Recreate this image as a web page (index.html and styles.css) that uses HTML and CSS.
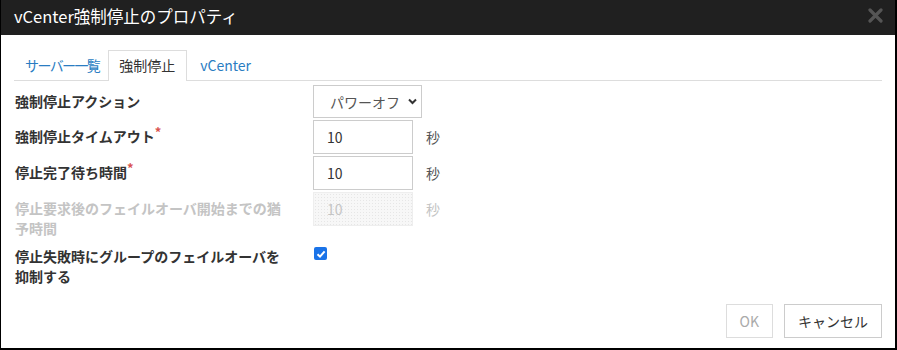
FILE: index.html
```html
<!DOCTYPE html>
<html lang="ja">
<head>
<meta charset="utf-8">
<link rel="stylesheet" href="styles.css">
</head>
<body>
<div class="dialog">
  <div class="header">
    <span class="title">vCenter強制停止のプロパティ</span>
    <svg class="close" width="15" height="15" viewBox="0 0 15 15"><path d="M2 2 L13 13 M13 2 L2 13" stroke="#555" stroke-width="3.2" stroke-linecap="round"/></svg>
  </div>
  <div class="body">
    <div class="tabs">
      <span class="tab narrow">サーバー一覧</span>
      <span class="tab active">強制停止</span>
      <span class="tab">vCenter</span>
    </div>
    <div class="form">
      <div class="row">
        <div class="label">強制停止アクション</div>
        <div class="ctrl"><div class="select">パワーオフ<svg class="caret" width="9" height="7" viewBox="0 0 9 7"><path d="M1 1.5 L4.5 5 L8 1.5" fill="none" stroke="#333" stroke-width="2"/></svg></div></div>
      </div>
      <div class="row">
        <div class="label">強制停止タイムアウト<span class="req">*</span></div>
        <div class="ctrl"><div class="input">10</div><span class="unit">秒</span></div>
      </div>
      <div class="row">
        <div class="label">停止完了待ち時間<span class="req">*</span></div>
        <div class="ctrl"><div class="input">10</div><span class="unit">秒</span></div>
      </div>
      <div class="row disabled">
        <div class="label">停止要求後のフェイルオーバ開始までの猶予時間</div>
        <div class="ctrl"><div class="input">10</div><span class="unit">秒</span></div>
      </div>
      <div class="row check-row">
        <div class="label">停止失敗時にグループのフェイルオーバを抑制する</div>
        <div class="ctrl"><span class="checkbox"><svg width="12" height="12" viewBox="0 0 12 12"><path d="M2.5 6.2 L5 8.6 L9.6 3.4" fill="none" stroke="#fff" stroke-width="2"/></svg></span></div>
      </div>
    </div>
    <div class="footer">
      <button class="btn disabled-btn">OK</button>
      <button class="btn">キャンセル</button>
    </div>
  </div>
</div>
</body>
</html>
```
FILE: styles.css
```css
* { box-sizing: border-box; }
html, body { margin: 0; padding: 0; background: #fff; }
body {
  font-family: "Noto Sans CJK JP", "Noto Sans", sans-serif;
  font-size: 14px;
  color: #333;
}
.dialog {
  width: 897px;
  height: 350px;
  border-left: 1px solid #000;
  border-right: 2px solid #000;
  border-bottom: 2px solid #000;
  display: flex;
  flex-direction: column;
}
.header {
  height: 35px;
  background: #202020;
  display: flex;
  align-items: center;
  justify-content: space-between;
  padding: 0 12px 0 13px;
}
.title {
  color: #fff;
  font-size: 16.5px;
  line-height: 1;
  margin-top: -3px;
}
.close {
  margin-top: -4px;
}
.body {
  padding: 15px 13px 0 13px;
  flex: 1;
  display: flex;
  flex-direction: column;
}
.tabs {
  display: flex;
  border-bottom: 1px solid #ddd;
  height: 31px;
}
.tab {
  color: #2a7dc2;
  padding: 0 11px 0 10px;
  line-height: 29px;
  border: 1px solid transparent;
  border-bottom: none;
  margin-right: 2px;
}
.tab.narrow { letter-spacing: -1.6px; padding-right: 6px; }
.tab.active {
  color: #333;
  border-color: #ddd;
  background: #fff;
  height: 31px;
}
.form {
  padding-top: 4px;
  display: flex;
  flex-direction: column;
  gap: 2px;
}
.row {
  display: flex;
  align-items: flex-start;
}
.label {
  width: 299px;
  padding: 6px 29px 0 1px;
  font-weight: bold;
  line-height: 20px;
  color: #333;
}
.req { color: #d9534f; font-weight: bold; position: relative; top: -5px; font-size: 13px; }
.ctrl {
  display: flex;
  align-items: center;
}
.select {
  width: 109px;
  height: 33px;
  border: 1px solid #ccc;
  padding-left: 16px;
  display: flex;
  align-items: center;
  justify-content: space-between;
  padding-right: 4px;
  color: #555;
}
.input {
  width: 100px;
  height: 34px;
  border: 1px solid #ccc;
  padding-left: 13px;
  line-height: 32px;
  color: #333;
}
.unit {
  margin-left: 13px;
  color: #555;
}
.disabled .label { color: #c4c4c4; }
.disabled .input {
  color: #c4c4c4;
  border-color: #eee;
  background-color: #f7f7f7;
  background-image: radial-gradient(#e6e6e6 0.7px, transparent 0.8px);
  background-size: 3px 3px;
}
.disabled .unit { color: #c4c4c4; }
.check-row .ctrl { padding-top: 7px; padding-left: 1px; }
.checkbox {
  width: 13px;
  height: 13px;
  background: #1a73e8;
  border-radius: 2px;
  display: flex;
  align-items: center;
  justify-content: center;
}
.footer {
  margin-top: auto;
  margin-bottom: 10px;
  display: flex;
  justify-content: flex-end;
  gap: 11px;
}
.btn {
  font-family: inherit;
  font-size: 14px;
  height: 34px;
  background: #fff;
  border: 1px solid #ccc;
  color: #333;
  padding: 0 13px;
  border-radius: 0;
}
.disabled-btn {
  color: #aaa;
  border-color: #ddd;
}
```
